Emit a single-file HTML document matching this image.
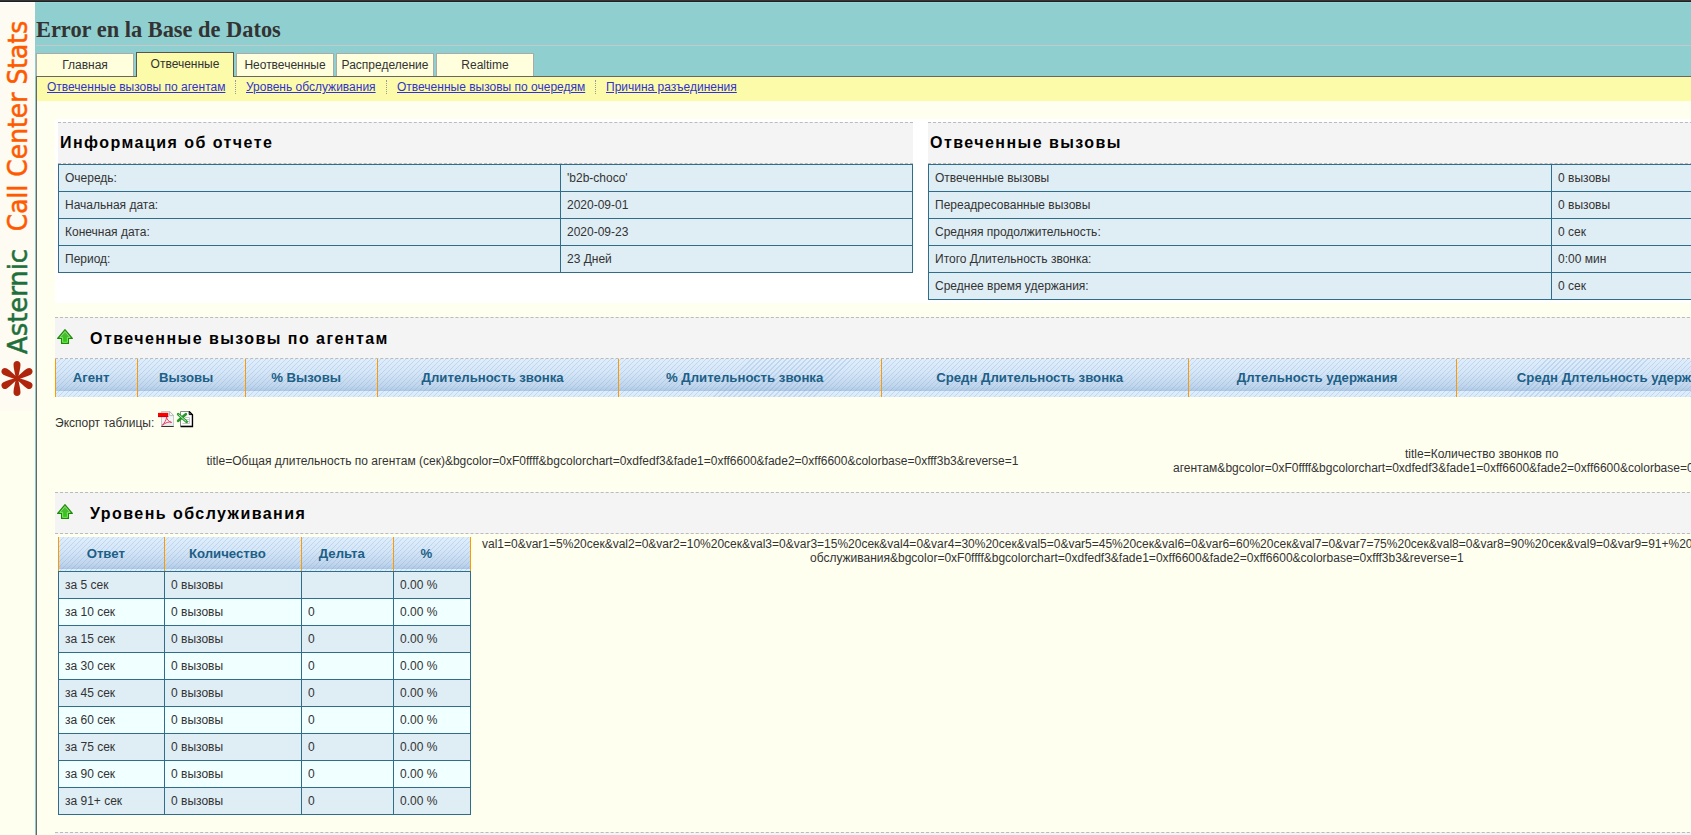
<!DOCTYPE html>
<html lang="ru">
<head>
<meta charset="utf-8">
<title>Asternic Call Center Stats</title>
<style>
html,body{margin:0;padding:0;}
body{width:1691px;height:835px;overflow:hidden;background:#fffff0;font-family:"Liberation Sans",sans-serif;font-size:12px;color:#333;position:relative;}
.abs{position:absolute;}
svg.abs{z-index:3;}
#topbar{left:0;top:0;width:1691px;height:2px;background:linear-gradient(#363636 0,#363636 1px,#202020 1px,#202020 2px);}
#headlight{left:35px;top:2px;width:1656px;height:1px;background:#97d8d5;}
#side{left:0;top:3px;width:34px;height:408px;background:#fdfbf2;}
#tealcol{left:35px;top:3px;width:1px;height:832px;background:#8ccdca;}
#sidewhite{left:0;top:2px;width:35px;height:1px;background:#fff;}
#head{left:35px;top:2px;width:1656px;height:75px;background:#90cfcf;}
#hr{left:36px;top:45px;width:1655px;height:1px;background:#c4c8c8;}
#title{left:36px;top:17px;font-family:"Liberation Serif",serif;font-weight:bold;font-size:22.4px;line-height:26px;color:#333;white-space:nowrap;}
#leftline{left:36px;top:76px;width:1px;height:759px;background:#666;}
#topline{left:36px;top:76px;width:1655px;height:1px;background:#666;}
#subnav{left:37px;top:77px;width:1654px;height:24px;background:#fbfbaa;}
.tab{position:absolute;top:53px;height:23px;width:98px;box-sizing:border-box;border:1px solid #aaa;border-bottom:none;background:#ffffdd;text-align:center;line-height:22px;font-size:12px;color:#333;}
.tab.act{top:52px;height:25px;border-color:#555;background:#fbfbaa;line-height:22px;}
.sub{position:absolute;top:80px;font-size:12px;line-height:14px;color:#3333cc;text-decoration:underline;white-space:nowrap;}
.sep{position:absolute;top:80px;width:0;height:14px;border-left:1px dotted #999;}
#white{left:55px;top:119px;width:1636px;height:184px;background:#fff;}
.cap{position:absolute;box-sizing:border-box;height:42px;background:#f4f4f4;border-top:1px dashed #bbb;border-bottom:1px dashed #bbb;font-weight:bold;font-size:16px;letter-spacing:1.45px;color:#000;line-height:40px;white-space:nowrap;}
table{border-collapse:collapse;}
table.info{position:absolute;table-layout:fixed;}
table.info td{border:1px solid #2f6d8a;background:#dfedf5;height:27px;padding:0 0 0 6px;font-size:12px;color:#333;box-sizing:border-box;}
.th{position:absolute;top:359px;height:38px;box-sizing:border-box;border-left:1px solid #f90;text-align:center;font-weight:bold;font-size:13.2px;color:#1d5f87;line-height:38px;white-space:nowrap;overflow:hidden;padding-right:10.8px;}
.stripe{position:absolute;background-image:repeating-linear-gradient(135deg,rgba(105,150,210,0.24) 0,rgba(105,150,210,0.24) 0.8px,rgba(255,255,255,0) 0.8px,rgba(255,255,255,0) 3.54px),linear-gradient(#dfeefc 0,#d5e6f6 13px,#c1d6ec 27px,#b3cbe6 31px,#aac5e3 32px);background-size:auto,100% 32px;background-repeat:repeat,repeat-y;}
.txt{position:absolute;font-size:12px;line-height:14px;color:#333;white-space:nowrap;}
table.sl{position:absolute;table-layout:fixed;}
table.sl th{height:34px;box-sizing:border-box;border-left:1px solid #f90;border-right:1px solid #f90;border-bottom:1px solid #2f6d8a;padding:0 11.4px 0 0;text-align:center;font-weight:bold;font-size:13.2px;color:#1d5f87;}
table.sl td{border:1px solid #2f6d8a;background:#f0ffff;height:27px;padding:0 0 0 6px;font-size:12px;color:#333;box-sizing:border-box;}
table.sl tr.o td{background:#dfedf5;}
</style>
</head>
<body>
<div id="side" class="abs"></div>
<div id="tealcol" class="abs"></div>
<svg class="abs" style="left:0;top:3px" width="34" height="408" viewBox="0 0 34 408">
<g transform="translate(17,375.5)" fill="#b0260c">
<path id="arm" d="M-1.2,0 C-1.6,-4 -3.5,-10 -3.5,-13.7 C-3.5,-16.2 -1.9,-17.4 0,-17.4 C1.9,-17.4 3.5,-16.2 3.5,-13.7 C3.5,-10 1.6,-4 1.2,0Z"/>
<path d="M-1.2,0 C-1.6,-4 -3.5,-10 -3.5,-13.7 C-3.5,-16.2 -1.9,-17.4 0,-17.4 C1.9,-17.4 3.5,-16.2 3.5,-13.7 C3.5,-10 1.6,-4 1.2,0Z" transform="rotate(60)"/>
<path d="M-1.2,0 C-1.6,-4 -3.5,-10 -3.5,-13.7 C-3.5,-16.2 -1.9,-17.4 0,-17.4 C1.9,-17.4 3.5,-16.2 3.5,-13.7 C3.5,-10 1.6,-4 1.2,0Z" transform="rotate(120)"/>
<path d="M-1.2,0 C-1.6,-4 -3.5,-10 -3.5,-13.7 C-3.5,-16.2 -1.9,-17.4 0,-17.4 C1.9,-17.4 3.5,-16.2 3.5,-13.7 C3.5,-10 1.6,-4 1.2,0Z" transform="rotate(180)"/>
<path d="M-1.2,0 C-1.6,-4 -3.5,-10 -3.5,-13.7 C-3.5,-16.2 -1.9,-17.4 0,-17.4 C1.9,-17.4 3.5,-16.2 3.5,-13.7 C3.5,-10 1.6,-4 1.2,0Z" transform="rotate(240)"/>
<path d="M-1.2,0 C-1.6,-4 -3.5,-10 -3.5,-13.7 C-3.5,-16.2 -1.9,-17.4 0,-17.4 C1.9,-17.4 3.5,-16.2 3.5,-13.7 C3.5,-10 1.6,-4 1.2,0Z" transform="rotate(300)"/>
<circle r="2.6"/>
</g>
<text transform="translate(26.6,351) rotate(-90) scale(1.08,1)" font-family="'DejaVu Sans Condensed','DejaVu Sans',sans-serif" font-size="26.6" fill="#1f6f3c" stroke="#1f6f3c" stroke-width="0.5">Asternic</text>
<text transform="translate(26.6,228.2) rotate(-90) scale(1.044,1)" font-family="'DejaVu Sans Condensed','DejaVu Sans',sans-serif" font-size="26.6" fill="#ff5a00" stroke="#ff5a00" stroke-width="0.5">Call Center Stats</text>
</svg>
<div id="sidewhite" class="abs"></div>
<div id="head" class="abs"></div>
<div id="headlight" class="abs"></div>
<div id="topbar" class="abs"></div>
<div id="hr" class="abs"></div>
<div id="title" class="abs">Error en la Base de Datos</div>
<div id="topline" class="abs"></div>
<div id="subnav" class="abs"></div>
<div id="leftline" class="abs"></div>

<div class="tab" style="left:36px">Главная</div>
<div class="tab act" style="left:136px">Отвеченные</div>
<div class="tab" style="left:236px">Неотвеченные</div>
<div class="tab" style="left:336px">Распределение</div>
<div class="tab" style="left:436px">Realtime</div>

<span class="sub" style="left:47px">Отвеченные вызовы по агентам</span>
<div class="sep" style="left:235px"></div>
<span class="sub" style="left:246px">Уровень обслуживания</span>
<div class="sep" style="left:386px"></div>
<span class="sub" style="left:397px">Отвеченные вызовы по очередям</span>
<div class="sep" style="left:595px"></div>
<span class="sub" style="left:606px">Причина разъединения</span>

<div id="white" class="abs"></div>
<div class="cap" style="left:58px;top:122px;width:855px;padding-left:2px">Информация об отчете</div>
<div class="cap" style="left:928px;top:122px;width:800px;padding-left:2px">Отвеченные вызовы</div>

<table class="info" style="left:58px;top:164px;width:854px">
<colgroup><col style="width:502px"><col style="width:352px"></colgroup>
<tr><td>Очередь:</td><td>'b2b-choco'</td></tr>
<tr><td>Начальная дата:</td><td>2020-09-01</td></tr>
<tr><td>Конечная дата:</td><td>2020-09-23</td></tr>
<tr><td>Период:</td><td>23 Дней</td></tr>
</table>

<table class="info" style="left:928px;top:164px;width:856px">
<colgroup><col style="width:623px"><col style="width:233px"></colgroup>
<tr><td>Отвеченные вызовы</td><td>0 вызовы</td></tr>
<tr><td>Переадресованные вызовы</td><td>0 вызовы</td></tr>
<tr><td>Средняя продолжительность:</td><td>0 сек</td></tr>
<tr><td>Итого Длительность звонка:</td><td>0:00 мин</td></tr>
<tr><td>Среднее время удержания:</td><td>0 сек</td></tr>
</table>

<div class="cap" style="left:55px;top:317px;width:1700px;padding-left:35px;line-height:42px">Отвеченные вызовы по агентам</div>
<div class="stripe" style="left:55px;top:359px;width:1700px;height:38px"></div>
<div class="th" style="left:55px;width:82px">Агент</div>
<div class="th" style="left:137px;width:108px">Вызовы</div>
<div class="th" style="left:245px;width:132px">% Вызовы</div>
<div class="th" style="left:377px;width:241px">Длительность звонка</div>
<div class="th" style="left:618px;width:263px">% Длительность звонка</div>
<div class="th" style="left:881px;width:307px">Средн Длительность звонка</div>
<div class="th" style="left:1188px;width:268px">Длтельность удержания</div>
<div class="th" style="left:1456px;width:337px">Средн Длтельность удержания</div>

<svg class="abs" style="left:57px;top:329px" width="16" height="16" viewBox="0 0 16 16">
<defs><linearGradient id="ag1" x1="0" y1="0" x2="0" y2="1"><stop offset="0" stop-color="#5cb848"/><stop offset="0.55" stop-color="#3fbf25"/><stop offset="1" stop-color="#25d400"/></linearGradient></defs>
<path d="M8,0.7 L15.4,9.4 H11.5 V14.4 H4.5 V9.4 H0.6 Z" fill="url(#ag1)" stroke="#1c8a05" stroke-width="1.1" stroke-linejoin="round"/>
<path d="M8,2.5 L13,8.4 H10.4 V13.3 H5.6 V8.4 H3 Z" fill="none" stroke="#a5ec96" stroke-width="0.8" stroke-opacity="0.9"/>
</svg>
<svg class="abs" style="left:57px;top:504px" width="16" height="16" viewBox="0 0 16 16">
<defs><linearGradient id="ag2" x1="0" y1="0" x2="0" y2="1"><stop offset="0" stop-color="#5cb848"/><stop offset="0.55" stop-color="#3fbf25"/><stop offset="1" stop-color="#25d400"/></linearGradient></defs>
<path d="M8,0.7 L15.4,9.4 H11.5 V14.4 H4.5 V9.4 H0.6 Z" fill="url(#ag2)" stroke="#1c8a05" stroke-width="1.1" stroke-linejoin="round"/>
<path d="M8,2.5 L13,8.4 H10.4 V13.3 H5.6 V8.4 H3 Z" fill="none" stroke="#a5ec96" stroke-width="0.8" stroke-opacity="0.9"/>
</svg>
<svg class="abs" style="left:157px;top:411px" width="18" height="17" viewBox="0 0 18 17">
<defs><linearGradient id="pg" x1="0" y1="0" x2="0" y2="1"><stop offset="0" stop-color="#dfe6e6"/><stop offset="0.5" stop-color="#f4f7f7"/><stop offset="1" stop-color="#e6ecec"/></linearGradient></defs>
<path d="M4.5,0.5 H12.6 L16.5,4.4 V15.3 H4.5 Z" fill="url(#pg)" stroke="#c6cdcd" stroke-width="1"/>
<path d="M4.3,15.5 H16.7" stroke="#3a3030" stroke-width="1"/>
<path d="M12.6,0.5 V4.4 H16.5 Z" fill="#fff" stroke="#a8aeae" stroke-width="0.8"/>
<rect x="1" y="1.9" width="10.2" height="4.1" fill="#f00"/>
<rect x="1" y="5.2" width="10.2" height="0.9" fill="#c40010"/>
<path d="M5.2,14.3 C7.6,12 9.4,8.8 9.6,6.2 C9.9,8.6 11.6,10.6 14.6,11.4 C11.8,10.4 8.6,11.6 5.2,14.3 Z" fill="none" stroke="#f02a50" stroke-width="0.9" stroke-linejoin="round"/>
</svg>
<svg class="abs" style="left:176px;top:411px" width="18" height="17" viewBox="0 0 18 17">
<path d="M4.5,0.5 H13.2 L16.3,3.6 V15.3 H4.5 Z" fill="#fff" stroke="#8a8a8a" stroke-width="1"/>
<path d="M13.2,0.5 L16.5,3.8 V15.5 H4.6" fill="none" stroke="#000" stroke-width="1.3"/>
<path d="M13.2,0.6 V3.6 H16.4" fill="none" stroke="#000" stroke-width="1"/>
<path d="M9,6.5 H13.5 M9,8.5 H13.5 M9,10.5 H13.5 M6.5,12.5 H13.5 M13.5,6.5 V12.5" stroke="#c8c8c8" stroke-width="1" fill="none"/>
<path d="M2.2,3.2 L10.6,10.8 M9.8,3.2 L2.2,9.8" stroke="#239a23" stroke-width="2.7" stroke-linecap="round" fill="none"/>
<path d="M2.6,3.6 L10.2,10.4" stroke="#fff" stroke-width="0.8" fill="none"/>
</svg>
<div class="txt" style="left:55px;top:416px">Экспорт таблицы:</div>

<div class="txt" style="left:206.5px;top:454px">title=Общая длительность по агентам (сек)&amp;bgcolor=0xF0ffff&amp;bgcolorchart=0xdfedf3&amp;fade1=0xff6600&amp;fade2=0xff6600&amp;colorbase=0xfff3b3&amp;reverse=1</div>
<div class="txt" style="left:1405px;top:447px">title=Количество звонков по</div>
<div class="txt" style="left:1173px;top:461px">агентам&amp;bgcolor=0xF0ffff&amp;bgcolorchart=0xdfedf3&amp;fade1=0xff6600&amp;fade2=0xff6600&amp;colorbase=0xfff3b3&amp;reverse=1</div>

<div class="cap" style="left:55px;top:492px;width:1700px;padding-left:35px;line-height:42px">Уровень обслуживания</div>

<div class="stripe" style="left:58px;top:537px;width:413px;height:34px"></div>
<table class="sl" style="left:58px;top:537px;width:412px">
<colgroup><col style="width:106px"><col style="width:137px"><col style="width:92px"><col style="width:77px"></colgroup>
<tr><th>Ответ</th><th>Количество</th><th>Дельта</th><th>%</th></tr>
<tr class="o"><td>за 5 сек</td><td>0 вызовы</td><td></td><td>0.00 %</td></tr>
<tr><td>за 10 сек</td><td>0 вызовы</td><td>0</td><td>0.00 %</td></tr>
<tr class="o"><td>за 15 сек</td><td>0 вызовы</td><td>0</td><td>0.00 %</td></tr>
<tr><td>за 30 сек</td><td>0 вызовы</td><td>0</td><td>0.00 %</td></tr>
<tr class="o"><td>за 45 сек</td><td>0 вызовы</td><td>0</td><td>0.00 %</td></tr>
<tr><td>за 60 сек</td><td>0 вызовы</td><td>0</td><td>0.00 %</td></tr>
<tr class="o"><td>за 75 сек</td><td>0 вызовы</td><td>0</td><td>0.00 %</td></tr>
<tr><td>за 90 сек</td><td>0 вызовы</td><td>0</td><td>0.00 %</td></tr>
<tr class="o"><td>за 91+ сек</td><td>0 вызовы</td><td>0</td><td>0.00 %</td></tr>
</table>

<div class="txt" style="left:482px;top:537px">val1=0&amp;var1=5%20сек&amp;val2=0&amp;var2=10%20сек&amp;val3=0&amp;var3=15%20сек&amp;val4=0&amp;var4=30%20сек&amp;val5=0&amp;var5=45%20сек&amp;val6=0&amp;var6=60%20сек&amp;val7=0&amp;var7=75%20сек&amp;val8=0&amp;var8=90%20сек&amp;val9=0&amp;var9=91+%20сек&amp;title=Уровень</div>
<div class="txt" style="left:810px;top:551px">обслуживания&amp;bgcolor=0xF0ffff&amp;bgcolorchart=0xdfedf3&amp;fade1=0xff6600&amp;fade2=0xff6600&amp;colorbase=0xfff3b3&amp;reverse=1</div>

<div class="abs" style="left:55px;top:832px;width:1700px;height:3px;border-top:1px dashed #bbb;background:#f4f4f4;box-sizing:border-box"></div>

</body>
</html>
